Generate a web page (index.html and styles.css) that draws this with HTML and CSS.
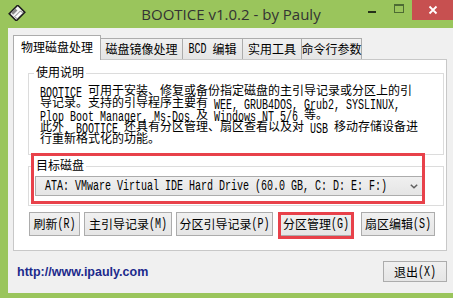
FILE: index.html
```html
<!DOCTYPE html>
<html>
<head>
<meta charset="utf-8">
<link rel="stylesheet" href="styles.css">
</head>
<body>
<div class="win">
  <div class="titlebar">
    <div class="tb-left">
      <svg class="appicon" width="18" height="16" viewBox="0 0 18 16">
        <g transform="rotate(-45 9 8)">
          <rect x="3" y="3" width="12" height="10" fill="#f4f4f4" stroke="#1e1e1e" stroke-width="1.6"/>
          <rect x="5" y="3.6" width="6" height="3" fill="#8a8a8a"/>
          <rect x="5" y="9" width="8" height="3.2" fill="#ffffff" stroke="#555" stroke-width="0.7"/>
        </g>
      </svg>
    </div>
    <div class="title">BOOTICE v1.0.2 - by Pauly</div>
    <div class="tb-right">
      <span class="min"></span>
      <span class="max"></span>
      <span class="close">
        <svg width="10" height="10" viewBox="0 0 10 10"><path d="M1.5 1.5 L8.5 8.5 M8.5 1.5 L1.5 8.5" stroke="#fff" stroke-width="1.8"/></svg>
      </span>
    </div>
  </div>
  <div class="client">
    <div class="tabs">
      <div class="tab sel">物理磁盘处理</div>
      <div class="tab t2">磁盘镜像处理</div>
      <div class="tab t3"><span class="m">BCD </span>编辑</div>
      <div class="tab t4">实用工具</div>
      <div class="tab t5">命令行参数</div>
    </div>
    <div class="panel">
      <div class="group g1">
        <div class="legend">使用说明</div>
        <p class="desc"><span class="m">BOOTICE </span>可用于安装、修复或备份指定磁盘的主引导记录或分区上的引<br>导记录。支持的引导程序主要有<span class="m"> WEE, GRUB4DOS, Grub2, SYSLINUX,</span><br><span class="m">Plop Boot Manager, Ms-Dos </span>及<span class="m"> Windows NT 5/6 </span>等。<br>此外<span class="m">, BOOTICE </span>还具有分区管理、扇区查看以及对<span class="m"> USB </span>移动存储设备进<br>行重新格式化的功能。</p>
      </div>
      <div class="group g2">
        <div class="legend">目标磁盘</div>
        <div class="combo">
          <span class="m">ATA: VMware Virtual IDE Hard Drive (60.0 GB, C: D: E: F:)</span>
          <svg class="chev" width="8" height="5" viewBox="0 0 8 5"><path d="M0.8 0.8 L4 3.8 L7.2 0.8" fill="none" stroke="#606060" stroke-width="1.5"/></svg>
        </div>
      </div>
      <div class="btns">
        <div class="btn b1">刷新<span class="m">(R)</span></div>
        <div class="btn b2">主引导记录<span class="m">(M)</span></div>
        <div class="btn b3">分区引导记录<span class="m">(P)</span></div>
        <div class="btn b4 hl">分区管理<span class="m">(G)</span></div>
        <div class="btn b5">扇区编辑<span class="m">(S)</span></div>
      </div>
    </div>
    <div class="footer">
      <a class="link">http://www.ipauly.com</a>
      <div class="btn exit">退出<span class="m">(X)</span></div>
    </div>
  </div>
</div>
</body>
</html>
```
FILE: styles.css
```css
html, body {
  margin: 0;
  padding: 0;
}
body {
  width: 453px;
  height: 298px;
  overflow: hidden;
  background: #9ac55c;
  font-family: "Noto Sans CJK SC", "Liberation Sans", sans-serif;
  font-size: 12px;
  line-height: 12px;
  color: #000;
}
.win {
  display: flex;
  flex-direction: column;
}
.titlebar {
  height: 28px;
  display: grid;
  grid-template-columns: 1fr auto 1fr;
}
.tb-left {
  padding: 5px 0 0 8px;
}
.appicon {
  display: block;
}
.title {
  font-family: "Open Sans", "Noto Sans", sans-serif;
  font-size: 15px;
  line-height: 28px;
  color: #333;
  padding-left: 9px;
  white-space: nowrap;
}
.tb-right {
  display: flex;
  justify-content: flex-end;
  align-items: flex-start;
}
.min {
  width: 8px;
  height: 2px;
  margin-top: 11px;
  background: #25311a;
}
.max {
  width: 8px;
  height: 6px;
  margin-left: 18px;
  margin-top: 4px;
  border: 1px solid #4d6b33;
  border-top-width: 2px;
}
.close {
  width: 41px;
  height: 20px;
  margin-left: 8px;
  background: #c75050;
  display: flex;
  align-items: center;
  justify-content: center;
}
.close svg {
  display: block;
}
.client {
  margin-left: 8px;
  width: 445px;
  height: 265px;
  box-sizing: border-box;
  background: #f0f0f0;
  padding: 7px 6px 0 5px;
}
.m {
  display: inline-block;
  font-family: "Liberation Mono", monospace;
  font-size: 10px;
  line-height: 6px;
  white-space: pre;
  transform: translateY(1px) scaleY(1.4);
  vertical-align: 0;
}
.tabs {
  display: flex;
  align-items: flex-end;
  height: 24px;
}
.tab {
  box-sizing: border-box;
  height: 21px;
  border: 1px solid #acacac;
  border-bottom: none;
  background: linear-gradient(#f0f0f0, #e5e5e5);
  display: flex;
  align-items: center;
  justify-content: center;
  margin-left: -1px;
  white-space: nowrap;
}
.tab.sel {
  margin-left: 0;
  width: 88px;
  height: 25px;
  margin-bottom: -1px;
  background: #fff;
  position: relative;
  z-index: 1;
  padding-bottom: 2px;
}
.t2 { width: 83px; }
.t3 { width: 61px; }
.t4 { width: 60px; }
.t5 { width: 61px; }
.panel {
  box-sizing: border-box;
  width: 434px;
  border: 1px solid #c8c8c8;
  background: #fff;
  padding: 0 0 14px 0;
}
.group {
  box-sizing: border-box;
  width: 416px;
  margin-left: 14px;
  border: 1px solid #dcdcdc;
  position: relative;
}
.legend {
  display: block;
  width: fit-content;
  background: #fff;
  padding: 0 2px;
  margin-left: 5px;
  height: 12px;
  margin-top: -8px;
}
.g1 {
  margin-top: 13px;
}
.desc {
  margin: 6px 0 10px 11px;
  white-space: nowrap;
}
.g2 {
  margin-top: 11px;
}
.g2::after {
  content: "";
  position: absolute;
  left: 2px;
  top: -14px;
  width: 394px;
  height: 51px;
  box-sizing: border-box;
  border: 3px solid #e8414a;
}
.combo {
  box-sizing: border-box;
  width: 388px;
  height: 20px;
  margin: 5px 0 9px 6px;
  border: 1px solid #acacac;
  background: linear-gradient(#f0f0f0, #e5e5e5);
  display: flex;
  align-items: center;
  justify-content: space-between;
  padding: 0 4px 0 9px;
}
.chev {
  display: block;
}
.btns {
  display: flex;
  margin-top: 6px;
  margin-left: 15px;
}
.btn {
  box-sizing: border-box;
  height: 24px;
  border: 1px solid #acacac;
  background: linear-gradient(#f0f0f0, #e5e5e5);
  display: flex;
  align-items: center;
  justify-content: center;
  white-space: nowrap;
  position: relative;
}
.b1 { width: 51px; }
.b2 { width: 88px; margin-left: 4px; }
.b3 { width: 97px; margin-left: 4px; }
.b4 { width: 74px; margin-left: 6px; }
.b5 { width: 74px; margin-left: 8px; }
.hl::after {
  content: "";
  position: absolute;
  left: -2px;
  top: -1px;
  right: -2px;
  bottom: -4px;
  border: 3px solid #e8414a;
}
.footer {
  display: flex;
  align-items: center;
  justify-content: space-between;
  width: 434px;
  margin-top: 10px;
}
.link {
  margin-left: 4px;
  font-family: "Liberation Sans", Arial, sans-serif;
  font-weight: bold;
  font-size: 12.5px;
  line-height: 14px;
  color: #1c2a8c;
  text-decoration: none;
}
.exit {
  width: 64px;
  height: 21px;
}
```
